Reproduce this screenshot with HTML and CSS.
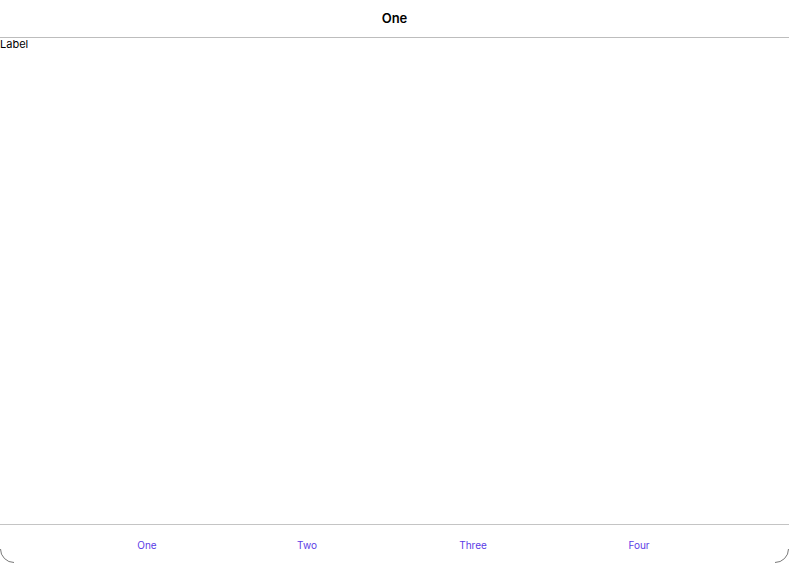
FILE: index.html
```html
<!DOCTYPE html>
<html>
<head>
<meta charset="utf-8">
<link rel="stylesheet" href="styles.css">
</head>
<body>
<div class="screen">
  <header class="navbar"><span class="title">One</span></header>
  <main class="content"><span class="label">Label</span></main>
  <nav class="tabbar">
    <span class="tab tab-a">One</span>
    <span class="tab tab-b">Two</span>
    <span class="tab tab-c">Three</span>
    <span class="tab tab-d">Four</span>
  </nav>
  <svg class="corner corner-left" width="16" height="16" viewBox="0 0 16 16"><path d="M0.5 2 A13.5 13.5 0 0 0 14 15.5" fill="none" stroke="#555" stroke-width="0.8"/></svg>
  <svg class="corner corner-right" width="16" height="16" viewBox="0 0 16 16"><path d="M15.5 2 A13.5 13.5 0 0 1 2 15.5" fill="none" stroke="#555" stroke-width="0.8"/></svg>
</div>
</body>
</html>
```
FILE: styles.css
```css
html, body {
  margin: 0;
  padding: 0;
  background: #fff;
}
.screen {
  position: relative;
  width: 789px;
  height: 563px;
  display: flex;
  flex-direction: column;
  font-family: "Inter", "Roboto", "Liberation Sans", sans-serif;
  color: #000;
  overflow: hidden;
}
.navbar {
  height: 37px;
  border-bottom: 1px solid #bdbdbd;
  display: flex;
  align-items: center;
  justify-content: center;
  flex: none;
}
.title {
  font-size: 13px;
  font-weight: 600;
  padding-bottom: 2px;
}
.content {
  flex: 1;
}
.label {
  display: block;
  font-size: 11px;
  line-height: 13px;
}
.tabbar {
  flex: none;
  height: 39px;
  border-top: 1px solid #c4c4c4;
  display: flex;
  align-items: center;
  padding-left: 67px;
  padding-top: 2px;
  box-sizing: border-box;
}
.tab {
  font-size: 10px;
  color: #5b3ce6;
  text-align: center;
}
.tab-a { width: 160px; }
.tab-b { width: 160px; }
.tab-c { width: 166px; margin-left: 3px; }
.tab-d { width: 166px; }
.corner {
  position: absolute;
  bottom: 0;
}
.corner-left { left: 0; }
.corner-right { right: 0; }
```
